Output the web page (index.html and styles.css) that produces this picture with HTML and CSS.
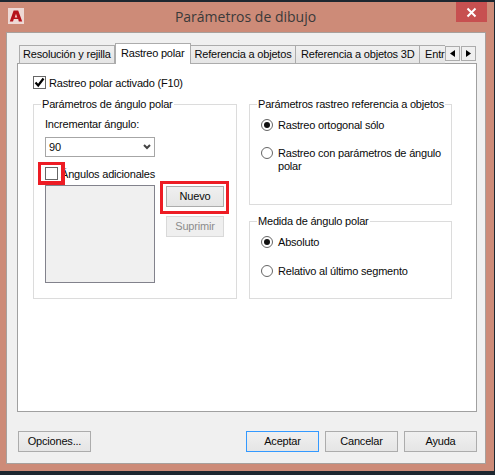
FILE: index.html
```html
<!DOCTYPE html>
<html lang="es">
<head>
    <meta charset="UTF-8">
    <meta name="viewport" content="width=device-width, initial-scale=1.0">
    <title>Parámetros de dibujo</title>
    <link rel="stylesheet" href="styles.css">
</head>
<body>
    <div class="window">
        <div class="titlebar">
            <div class="app-icon">
                <svg width="16" height="16" viewBox="0 0 16 16">
                    <path d="M5.6 2.5 H10.2 L14.2 13.5 H10.8 L10.2 11 H5.8 L5 13.5 H1.8 Z" fill="#b5121b"/>
                    <path d="M8 5.8 L9.3 9.4 H6.7 Z" fill="#f3c9c6"/>
                </svg>
            </div>
            <div class="window-title">Parámetros de dibujo</div>
            <div class="close-button">
                <svg width="11" height="11" viewBox="0 0 11 11">
                    <path d="M1.5 1.5 L9.5 9.5 M9.5 1.5 L1.5 9.5" stroke="#fff" stroke-width="2"/>
                </svg>
            </div>
        </div>

        <div class="panel">
            <div class="tabs">
                <div class="tab tab-grid">Resolución y rejilla</div>
                <div class="tab tab-active">Rastreo polar</div>
                <div class="tab tab-ref">Referencia a objetos</div>
                <div class="tab tab-ref3d">Referencia a objetos 3D</div>
                <div class="tab tab-cut">Entr</div>
                <div class="tab-scroll">
                    <svg width="5" height="7" viewBox="0 0 5 7"><path d="M5 0 V7 L0 3.5 Z" fill="#000"/></svg>
                </div>
                <div class="tab-scroll">
                    <svg width="5" height="7" viewBox="0 0 5 7"><path d="M0 0 V7 L5 3.5 Z" fill="#000"/></svg>
                </div>
            </div>

            <div class="page">
                <div class="check-row">
                    <span class="checkbox">
                        <svg width="11" height="11" viewBox="0 0 11 11">
                            <path d="M1.5 5.5 L4.2 8.5 L9.5 1.5" fill="none" stroke="#000" stroke-width="2.2"/>
                        </svg>
                    </span>
                    <span>Rastreo polar activado (F10)</span>
                </div>

                <div class="columns">
                    <fieldset class="group group-angles">
                        <legend>Parámetros de ángulo polar</legend>
                        <div class="field-label">Incrementar ángulo:</div>
                        <div class="select">
                            <span>90</span>
                            <svg width="8" height="6" viewBox="0 0 8 6">
                                <path d="M1 1 L4 4 L7 1" fill="none" stroke="#444" stroke-width="2"/>
                            </svg>
                        </div>
                        <div class="check-row extra-row">
                            <span class="checkbox"></span>
                            <span>Ángulos adicionales</span>
                            <div class="mark mark-check"></div>
                        </div>
                        <div class="list-row">
                            <div class="listbox"></div>
                            <div class="side-buttons">
                                <div class="button-wrap">
                                    <div class="button button-small">Nuevo</div>
                                    <div class="mark mark-button"></div>
                                </div>
                                <div class="button button-small button-disabled">Suprimir</div>
                            </div>
                        </div>
                    </fieldset>

                    <div class="right-column">
                        <fieldset class="group group-tracking">
                            <legend>Parámetros rastreo referencia a objetos</legend>
                            <div class="radio-row">
                                <span class="radio radio-on"></span>
                                <span>Rastreo ortogonal sólo</span>
                            </div>
                            <div class="radio-row radio-row-wrap">
                                <span class="radio"></span>
                                <span>Rastreo con parámetros de ángulo polar</span>
                            </div>
                        </fieldset>
                        <fieldset class="group group-measure">
                            <legend>Medida de ángulo polar</legend>
                            <div class="radio-row">
                                <span class="radio radio-on"></span>
                                <span>Absoluto</span>
                            </div>
                            <div class="radio-row radio-row-last">
                                <span class="radio"></span>
                                <span>Relativo al último segmento</span>
                            </div>
                        </fieldset>
                    </div>
                </div>
            </div>

            <div class="footer">
                <div class="button button-large">Opciones...</div>
                <div class="footer-right">
                    <div class="button button-large button-default">Aceptar</div>
                    <div class="button button-large">Cancelar</div>
                    <div class="button button-large">Ayuda</div>
                </div>
            </div>
        </div>
    </div>
</body>
</html>
```

FILE: styles.css
```css
body {
    margin: 0;
    height: 475px;
    overflow: hidden;
    background: #1d2730;
    font-family: "Liberation Sans", Arial, sans-serif;
    font-size: 11px;
    letter-spacing: -0.2px;
    line-height: 14px;
    color: #0a0a0a;
}

.window {
    width: 494px;
    height: 469px;
    margin-top: 2px;
    background: #cd8b78;
    display: flex;
    flex-direction: column;
}

/* Title bar */
.titlebar {
    height: 30px;
    display: grid;
    grid-template-columns: 1fr auto 1fr;
    align-items: start;
    padding: 0 7px 0 8px;
}

.app-icon {
    width: 16px;
    height: 16px;
    margin-top: 6px;
    background: #eed9d5;
}

.window-title {
    font-family: "Open Sans", sans-serif;
    font-size: 14px;
    letter-spacing: 0;
    line-height: 20px;
    color: #3a3a3a;
    padding: 5px 4px 0 0;
}

.close-button {
    justify-self: end;
    width: 31px;
    height: 20px;
    background: #c75050;
    display: flex;
    align-items: center;
    justify-content: center;
}

/* Main panel */
.panel {
    height: 432px;
    margin: 0 8px 0 6px;
    box-sizing: border-box;
    padding: 10px 8px 0 10px;
    background: #f0f0f0;
    border: 1px solid #a8a09c;
}

.tabs {
    height: 21px;
    margin-bottom: -1px;
    padding-left: 2px;
    display: flex;
    align-items: flex-start;
    position: relative;
    z-index: 1;
}

.tab {
    box-sizing: border-box;
    height: 19px;
    margin-top: 2px;
    overflow: hidden;
    white-space: nowrap;
    text-align: center;
    line-height: 17px;
    background: linear-gradient(#f0f0f0, #e5e5e5);
    border: 1px solid #acacac;
    border-left-width: 0;
}

.tab-grid {
    width: 96px;
    border-left-width: 1px;
}

.tab-active {
    width: 76px;
    height: 21px;
    margin-top: 0;
    line-height: 19px;
    background: #fff;
    border-left-width: 1px;
    border-bottom: none;
}

.tab-ref {
    width: 106px;
}

.tab-ref3d {
    width: 124px;
}

.tab-cut {
    width: 25px;
    text-align: left;
    padding-left: 5px;
    border-right: none;
}

.tab-scroll {
    box-sizing: border-box;
    width: 15px;
    height: 15px;
    margin: 3px 1px 0 0;
    background: #f0f0f0;
    border: 1px solid #acacac;
    display: flex;
    align-items: center;
    justify-content: center;
}

.page {
    box-sizing: border-box;
    height: 349px;
    width: 460px;
    padding: 12px 0 0 15px;
    background: #fff;
    border: 1px solid #a0a0a0;
}

.check-row {
    display: flex;
    align-items: center;
    gap: 3px;
    height: 13px;
    position: relative;
}

.checkbox {
    box-sizing: border-box;
    width: 13px;
    height: 13px;
    background: #fff;
    border: 1px solid #666;
    display: flex;
    align-items: center;
    justify-content: center;
    flex: none;
}

.columns {
    display: flex;
    gap: 12px;
    margin-top: 8px;
}

/* Group boxes */
.group {
    box-sizing: border-box;
    margin: 0;
    padding: 0 11px;
    min-width: 0;
    border: 1px solid #dcdcdc;
}

.group legend {
    padding: 0 1px;
    margin-left: -4px;
    height: 14px;
    white-space: nowrap;
}

.group-angles {
    width: 204px;
    height: 202px;
}

.right-column {
    width: 203px;
    display: flex;
    flex-direction: column;
    gap: 9px;
}

.group-tracking {
    height: 108px;
    padding-right: 4px;
}

.group-measure {
    height: 85px;
}

.field-label {
    margin-top: 6px;
}

.select {
    box-sizing: border-box;
    width: 110px;
    height: 20px;
    margin-top: 6px;
    padding: 0 3px 0 3px;
    background: #fff;
    border: 1px solid #a6a6a6;
    display: flex;
    align-items: center;
    justify-content: space-between;
}

.extra-row {
    margin-top: 10px;
}

.list-row {
    display: flex;
    margin-top: 5px;
}

.listbox {
    box-sizing: border-box;
    width: 110px;
    height: 98px;
    background: #f0f0f0;
    border: 1px solid #82828c;
}

.side-buttons {
    display: flex;
    flex-direction: column;
    gap: 9px;
    margin: 1px 0 0 11px;
}

.button-wrap {
    position: relative;
}

/* Red highlight boxes drawn over the screenshot */
.mark {
    position: absolute;
    box-sizing: border-box;
    border-style: solid;
    border-color: #ed1c24;
}

.mark-check {
    left: -7px;
    top: -5px;
    width: 27px;
    height: 23px;
    border-width: 3px 4px 4px 3px;
}

.mark-button {
    left: -6px;
    top: -5px;
    width: 69px;
    height: 33px;
    border-width: 3px;
}

/* Radios */
.radio-row {
    display: flex;
    align-items: flex-start;
    gap: 5px;
    line-height: 13px;
    margin-top: 8px;
}

.radio-row-wrap {
    margin-top: 15px;
}

.radio-row-last {
    margin-top: 16px;
}

.radio {
    box-sizing: border-box;
    width: 12px;
    height: 12px;
    flex: none;
    background: #fff;
    border: 1px solid #666;
    border-radius: 50%;
    display: flex;
    align-items: center;
    justify-content: center;
}

.radio-on::after {
    content: "";
    width: 6px;
    height: 6px;
    border-radius: 50%;
    background: #111;
}

/* Buttons */
.button {
    box-sizing: border-box;
    height: 21px;
    line-height: 19px;
    text-align: center;
    background: linear-gradient(#f0f0f0, #e5e5e5);
    border: 1px solid #acacac;
}

.button-small {
    width: 58px;
}

.button-large {
    width: 73px;
}

.button-default {
    border-color: #3399ff;
}

.button-disabled {
    color: #8c8c8c;
    background: #efefef;
    border-color: #d9d9d9;
}

.footer {
    display: flex;
    justify-content: space-between;
    margin: 19px 0 0 1px;
}

.footer-right {
    display: flex;
    gap: 6px;
}
```
